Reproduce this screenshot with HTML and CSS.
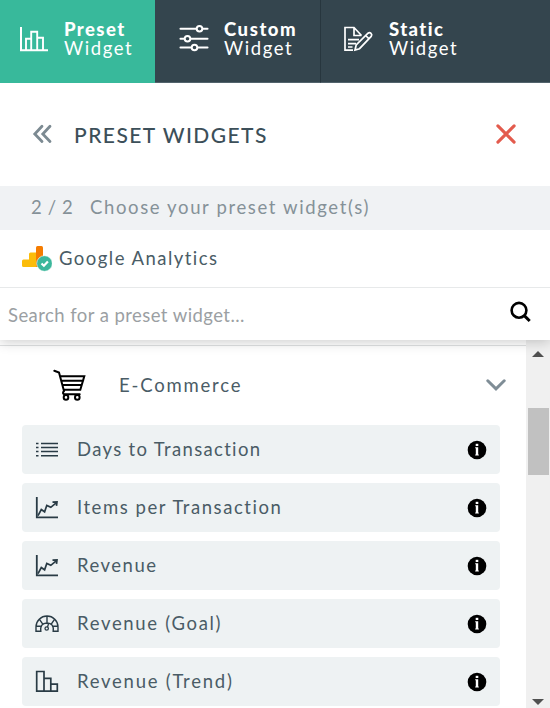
FILE: index.html
```html
<!DOCTYPE html>
<html lang="en">
<head>
<meta charset="utf-8">
<title>Preset Widgets</title>
<link rel="stylesheet" href="styles.css">
</head>
<body>
<svg width="0" height="0" class="defs">
  <symbol id="info" viewBox="0 0 20 20"><circle cx="10" cy="10" r="9.3" fill="#000"/><rect x="8.7" y="3.8" width="2.6" height="2.2" fill="#fff"/><path d="M8.2 7.2h3v7.2h.6v1H8.2v-1h.6V8.2h-.6z" fill="#fff"/></symbol>
  <symbol id="line" viewBox="0 0 24 24"><path d="M1.8 1v20.3H23" stroke-width="1.8"/><path d="M3 19.7 6.3 13.5l3.3 2.3 2.2-6.4 4 1.9 6-5M17.5 6.1l4.5-.3-.5 4" stroke-width="1.7"/></symbol>
</svg>
<nav class="tabs">
  <a class="tab tab-preset">
    <svg width="28" height="25" viewBox="0 0 28 25" class="icon white"><path d="M1 0v23.2h27" stroke-width="2"/><path d="M6 23V11.7h5.2M11.2 23V4.7h6V23M17.2 10.7H23V23" stroke-width="1.9"/></svg>
    <span class="tab-text"><b>Preset</b><span>Widget</span></span>
  </a>
  <a class="tab tab-custom">
    <svg width="30" height="28" viewBox="0 0 30 28" class="icon white"><path d="M1.5 3.8H17M24 3.8h4.5M1.5 13.8H5M12 13.8h16.5M1.5 22.5H12M19 22.5h9.5" stroke-width="2.1" stroke-linecap="round"/><circle cx="20.5" cy="3.8" r="2.8" stroke-width="2"/><circle cx="8.5" cy="13.8" r="2.8" stroke-width="2"/><circle cx="15.5" cy="22.5" r="2.8" stroke-width="2"/></svg>
    <span class="tab-text"><b>Custom</b><span>Widget</span></span>
  </a>
  <a class="tab tab-static">
    <svg width="31" height="26" viewBox="0 0 31 26" class="icon white"><path d="M18.5 9.5 11 1.5H2v22.7h8M11 1.5v8h7.5M5 13.7h11M5 17.7h8M5 21h4.5"/><path d="m12 24 1.2-5L25 7.2q1.6-1.2 3 .2t.2 3L16.5 22.7zM22.7 9.5l3.6 3.6"/></svg>
    <span class="tab-text"><b>Static</b><span>Widget</span></span>
  </a>
</nav>
<header class="title">
  <svg width="20" height="20" viewBox="0 0 20 20" class="icon back"><path d="M10 2.3 2.8 10l7.2 7.5M18 2.3 10.8 10l7.2 7.5"/></svg>
  <h1>PRESET WIDGETS</h1>
  <svg width="20" height="20" viewBox="0 0 20 20" class="icon close"><path d="M1.9 1.9 18.1 18.1M18.1 1.9 1.9 18.1"/></svg>
</header>
<div class="step"><span class="count">2 / 2</span><span class="choose">Choose your preset widget(s)</span></div>
<div class="source">
  <svg width="30" height="26" viewBox="0 0 30 26"><path d="M0 15q0-1.5 1.5-1.5H7V8q0-1.5 1.5-1.5H14V21H1.5Q0 21 0 19.5z" fill="#fbbc0a"/><path d="M14 1.5Q14 0 15.5 0h4Q21 0 21 1.5V21h-7z" fill="#f57c00"/><circle cx="22.5" cy="17.5" r="7.8" fill="#3cb79c" stroke="#fff" stroke-width=".6"/><path d="m19.5 17.5 2.4 2.3 4-4.2" fill="none" stroke="#fff" stroke-width="2.2"/></svg>
  <span class="source-name">Google Analytics</span>
</div>
<div class="search">
  <span class="placeholder">Search for a preset widget...</span>
  <svg width="22" height="22" viewBox="0 0 22 22" class="icon find"><circle cx="9" cy="9.3" r="7.4"/><path d="m14.3 14.6 5.4 5.4" stroke-width="3"/></svg>
</div>
<main class="panel">
  <section class="list">
    <div class="category">
      <svg width="34" height="32" viewBox="0 0 34 32" class="icon cart"><path d="M1.3 1.8 6 3.5l5 18.5q-2.2 2.7.4 3.2h15.3M7.5 7.3h23.8l-4 13.5H11M8.7 11.7h21.5M10 16h18.5"/><circle cx="13" cy="28.4" r="2.3"/><circle cx="24.3" cy="28.4" r="2.3"/></svg>
      <span class="category-name">E-Commerce</span>
      <svg width="20" height="12" viewBox="0 0 20 12" class="icon chevron"><path d="m1.8 1.8 8.2 8 8.2-8"/></svg>
    </div>
    <div class="item">
      <svg width="24" height="24" viewBox="0 0 24 24" class="icon dark"><path d="M1 5.5h2.5M6 5.5h17M1 9.5h2.5M6 9.5h17M1 13.5h2.5M6 13.5h17M1 17.8h2.5M6 17.8h17" stroke-width="1.4"/></svg>
      <span class="label l1">Days to Transaction</span><svg class="info" width="20" height="20"><use href="#info"/></svg>
    </div>
    <div class="item">
      <svg width="24" height="24" class="icon dark"><use href="#line"/></svg>
      <span class="label l2">Items per Transaction</span><svg class="info" width="20" height="20"><use href="#info"/></svg>
    </div>
    <div class="item">
      <svg width="24" height="24" class="icon dark"><use href="#line"/></svg>
      <span class="label l3">Revenue</span><svg class="info" width="20" height="20"><use href="#info"/></svg>
    </div>
    <div class="item">
      <svg width="24" height="24" viewBox="0 0 24 24" class="icon dark"><path d="M1 19.3v-4.3a11 11 0 0 1 22 0v4.3h-4.8q1-8.2-6.2-8.3-7.2.1-6.2 8.3zM12 4v6.7M4.3 7.2l3.3 4.7M19.7 7.2l-3.3 4.7M1.2 14.3H6M22.8 14.3H18" stroke-width="1.4"/><circle cx="11.7" cy="16.5" r="1.7" stroke-width="1.3"/><path d="m12.5 15 1-3" stroke-width="1.3"/></svg>
      <span class="label l4">Revenue (Goal)</span><svg class="info" width="20" height="20"><use href="#info"/></svg>
    </div>
    <div class="item">
      <svg width="24" height="24" viewBox="0 0 24 24" class="icon dark"><path d="M1.7 1.5H9v19.7H1.7zM9 8.4h6.8v12.8H9zM15.8 14.2h6.5v7h-6.5z"/></svg>
      <span class="label l5">Revenue (Trend)</span><svg class="info" width="20" height="20"><use href="#info"/></svg>
    </div>
  </section>
  <aside class="scrollbar"><i class="up"></i><i class="thumb"></i><i class="down"></i></aside>
</main>
</body>
</html>
```
FILE: styles.css
```css
* { box-sizing: border-box; }
body { margin: 0; width: 550px; height: 708px; overflow: hidden; background: #fff; font-family: Lato, sans-serif; color: #3c4f59; display: flex; flex-direction: column; }
.defs { display: none; }
.icon { fill: none; stroke: currentColor; stroke-width: 1.7; flex: none; }
.tabs { display: flex; height: 83px; flex: none; background: #34454e; color: #fff; }
.tab { display: flex; align-items: center; height: 83px; padding-bottom: 4px; border-bottom: 1px solid #52636c; }
.tab-preset { width: 155px; background: #38b99b; border-bottom-color: #38b99b; padding-left: 20px; gap: 16px; }
.tab-custom { width: 166px; padding-left: 24px; gap: 15px; border-right: 1px solid #27363e; }
.tab-static { flex: 1; padding-left: 22px; gap: 15px; }
.tab-text { display: flex; flex-direction: column; font-size: 18.5px; line-height: 19px; letter-spacing: 1.6px; }
.tab-text b { font-weight: 900; letter-spacing: 1.4px; }
.tab-custom b { letter-spacing: 1.55px; }
.title { height: 103px; flex: none; display: flex; align-items: center; padding: 0 34px 1px 32px; }
.title h1 { margin: 0 auto 0 22px; font-size: 21px; font-weight: 500; letter-spacing: 1.45px; }
.back { color: #7c8a92; stroke-width: 2.8; stroke-linecap: round; }
.close { color: #e35b4d; stroke-width: 3.1; stroke-linecap: round; }
.step { height: 44px; flex: none; background: #f0f2f4; color: #859198; display: flex; align-items: center; padding: 0 0 2px 31px; font-size: 18.5px; }
.count { width: 59px; letter-spacing: .6px; }
.choose { letter-spacing: 1.63px; }
.source { height: 58px; flex: none; display: flex; align-items: center; padding-left: 22px; border-bottom: 1px solid #e7e9ea; }
.source-name { margin: 0 0 1px 7px; font-size: 18.5px; letter-spacing: 1.47px; }
.search { height: 52px; flex: none; display: flex; align-items: center; justify-content: space-between; padding: 1px 18px 0 8px; background: #fff; box-shadow: 0 2px 12px rgba(0,0,0,.2); clip-path: inset(0 0 -20px 0); z-index: 1; }
.placeholder { font-size: 18.5px; color: #9b9fa3; letter-spacing: .43px; }
.find { stroke-width: 2.6; color: #000; margin-bottom: 5px; }
.panel { flex: 1; display: flex; min-height: 0; }
.list { width: 526px; padding: 5px 26px 0 22px; display: flex; flex-direction: column; gap: 9px; }
.category { height: 71px; flex: none; margin: 0 -26px 0 -22px; padding: 8px 20px 0 53px; border-top: 1px solid #dfe1e2; display: flex; align-items: center; }
.cart { color: #000; stroke-width: 2; stroke-linecap: round; }
.category-name { margin: 0 auto 0 32px; font-size: 18.5px; letter-spacing: 1.8px; }
.chevron { color: #7f8d96; stroke-width: 3; stroke-linecap: round; }
.item { height: 49px; flex: none; display: flex; align-items: center; padding: 0 13px; background: #eef2f3; border-radius: 4px; }
.dark { color: #293b45; }
.label { margin: 0 auto 1px 18px; font-size: 18.5px; }
.label, .category-name, .source-name { color: #4a5c66; }
.l1 { letter-spacing: 1.33px; }
.l2 { letter-spacing: 1.55px; }
.l3 { letter-spacing: 1.5px; }
.l4 { letter-spacing: 1.68px; }
.l5 { letter-spacing: 1.75px; }
.info { flex: none; }
.scrollbar { width: 24px; background: #f0f0f0; display: flex; flex-direction: column; align-items: center; padding: 11px 0 3px; }
.up { border: 6px solid transparent; border-top: 0; border-bottom-color: #505050; }
.thumb { width: 21px; height: 67px; margin: 51px 0 auto 1px; background: #c1c1c1; }
.down { border: 6px solid transparent; border-bottom: 0; border-top-color: #505050; }
```
